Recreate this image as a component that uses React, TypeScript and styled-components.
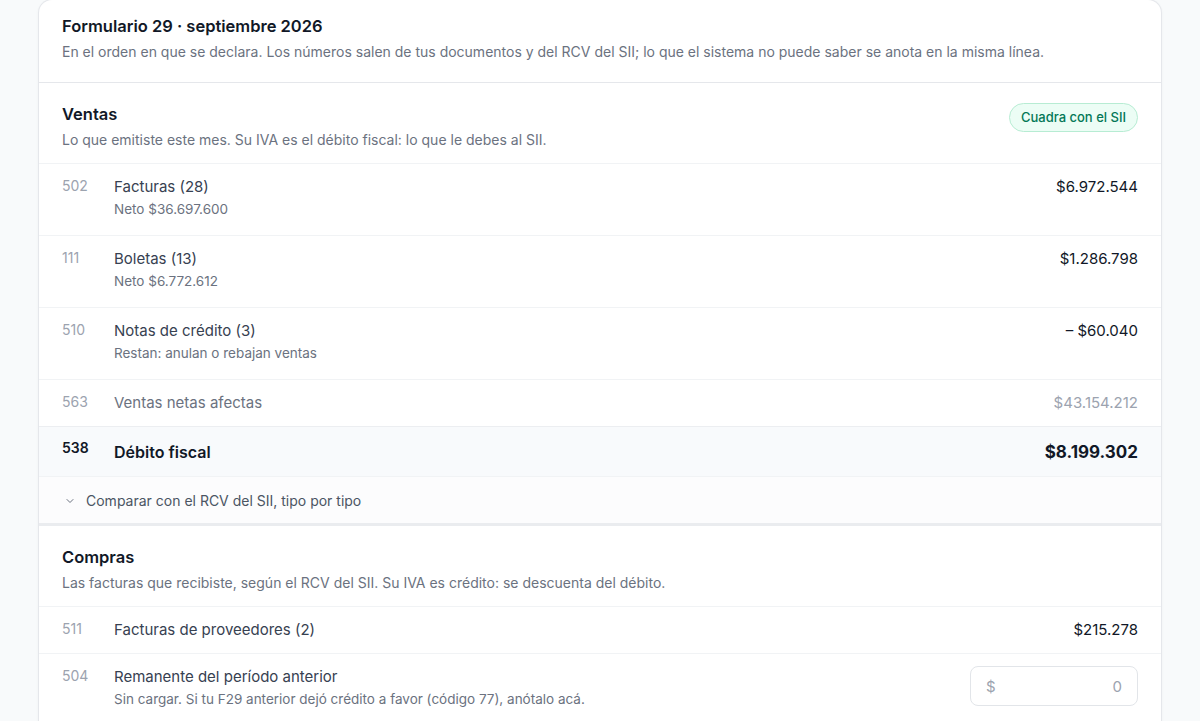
import styled, {createGlobalStyle} from "styled-components";

const GlobalStyle = createGlobalStyle`
  html, body {
    margin: 0;
    padding: 0;
    background: #f8fafb;
    font-family: Inter, "Liberation Sans", sans-serif;
    color: #111827;
  }
  * {
    box-sizing: border-box;
  }
`

type Tone = 'normal' | 'muted' | 'total'

interface IRow {
    code: string
    label: string
    sub?: string
    amount?: string
    tone?: Tone
    input?: boolean
}

const ventasRows: IRow[] = [
    {code: '502', label: 'Facturas (28)', sub: 'Neto $36.697.600', amount: '$6.972.544'},
    {code: '111', label: 'Boletas (13)', sub: 'Neto $6.772.612', amount: '$1.286.798'},
    {code: '510', label: 'Notas de crédito (3)', sub: 'Restan: anulan o rebajan ventas', amount: '– $60.040'},
    {code: '563', label: 'Ventas netas afectas', amount: '$43.154.212', tone: 'muted'},
    {code: '538', label: 'Débito fiscal', amount: '$8.199.302', tone: 'total'},
]

const comprasRows: IRow[] = [
    {code: '511', label: 'Facturas de proveedores (2)', amount: '$215.278'},
    {
        code: '504',
        label: 'Remanente del período anterior',
        sub: 'Sin cargar. Si tu F29 anterior dejó crédito a favor (código 77), anótalo acá.',
        input: true
    },
]

const LineRow = ({row}: { row: IRow }) => {
    const tone = row.tone ?? 'normal'
    return (
        <Row $tone={tone} $hasSub={!!row.sub}>
            <Code $tone={tone}>{row.code}</Code>
            <LabelBlock>
                <Label $tone={tone}>{row.label}</Label>
                {row.sub && <SubLabel>{row.sub}</SubLabel>}
            </LabelBlock>
            {row.input ? (
                <AmountInput>
                    <span>$</span>
                    <span>0</span>
                </AmountInput>
            ) : (
                <Amount $tone={tone}>{row.amount}</Amount>
            )}
        </Row>
    )
}

export default function App() {
    return (
        <>
            <GlobalStyle/>
            <Page>
                <Card>
                    <CardHeader>
                        <Title>Formulario 29 · septiembre 2026</Title>
                        <Subtitle>
                            En el orden en que se declara. Los números salen de tus documentos y del RCV del SII; lo que el sistema no puede saber se anota en la misma línea.
                        </Subtitle>
                    </CardHeader>

                    <Section>
                        <SectionHeader>
                            <SectionText>
                                <Title>Ventas</Title>
                                <Subtitle>Lo que emitiste este mes. Su IVA es el débito fiscal: lo que le debes al SII.</Subtitle>
                            </SectionText>
                            <Badge>Cuadra con el SII</Badge>
                        </SectionHeader>
                        {ventasRows.map(row => <LineRow key={row.code} row={row}/>)}
                        <Toggle>
                            <svg width="12" height="12" viewBox="0 0 24 24" fill="none" stroke="currentColor"
                                 strokeWidth="2" strokeLinecap="round" strokeLinejoin="round">
                                <path d="m6 9 6 6 6-6"/>
                            </svg>
                            Comparar con el RCV del SII, tipo por tipo
                        </Toggle>
                    </Section>

                    <Section>
                        <SectionHeader>
                            <SectionText>
                                <Title>Compras</Title>
                                <Subtitle>Las facturas que recibiste, según el RCV del SII. Su IVA es crédito: se descuenta del débito.</Subtitle>
                            </SectionText>
                        </SectionHeader>
                        {comprasRows.map(row => <LineRow key={row.code} row={row}/>)}
                    </Section>
                </Card>
            </Page>
        </>
    )
}

const Page = styled.div`
  min-height: 100vh;
  padding: 0 38px;
  display: flex;
`

const Card = styled.div`
  width: 1124px;
  margin-top: -1px;
  background: #ffffff;
  border: 1px solid #e5e7eb;
  border-bottom: none;
  border-radius: 14px 14px 0 0;
  box-shadow: 0 1px 3px rgba(15, 23, 42, 0.04);
`

const CardHeader = styled.div`
  padding: 15px 23px 20px 23px;
  border-bottom: 1px solid #e5e7eb;
  display: flex;
  flex-direction: column;
  gap: 5px;
`

const Title = styled.div`
  font-size: 16.5px;
  line-height: 22px;
  font-weight: 600;
  color: #111827;
`

const Subtitle = styled.div`
  font-size: 14px;
  line-height: 20px;
  color: #6b7280;
`

const Section = styled.div`
  & + & {
    border-top: 3px solid #eaecef;
  }
`

const SectionHeader = styled.div`
  display: flex;
  justify-content: space-between;
  align-items: flex-start;
  padding: 20px 23px 13px 23px;
  border-bottom: 1px solid #f1f3f5;
`

const SectionText = styled.div`
  display: flex;
  flex-direction: column;
  gap: 5px;
`

const Badge = styled.div`
  padding: 5px 11px;
  border-radius: 999px;
  background: #ecfdf5;
  border: 1px solid #b7ecd3;
  color: #047857;
  font-size: 13px;
  line-height: 17px;
  font-weight: 500;
  white-space: nowrap;
`

const Row = styled.div<{ $tone: Tone, $hasSub: boolean }>`
  display: flex;
  align-items: flex-start;
  padding: ${p => p.$tone === 'total' ? '13px 23px 12px 23px' : p.$hasSub ? '12px 23px 17px 23px' : '12px 23px 12px 23px'};
  border-bottom: 1px solid #f1f3f5;
  background: ${p => p.$tone === 'total' ? '#f8fafc' : '#ffffff'};
  border-top: ${p => p.$tone === 'total' ? '1px solid #eceef1' : 'none'};
  margin-top: ${p => p.$tone === 'total' ? '-1px' : '0'};
`

const Code = styled.div<{ $tone: Tone }>`
  width: 52px;
  flex-shrink: 0;
  font-size: 14px;
  line-height: ${p => p.$tone === 'total' ? '16px' : '20px'};
  color: ${p => p.$tone === 'total' ? '#111827' : '#9ca3af'};
  font-weight: ${p => p.$tone === 'total' ? 600 : 400};
`

const LabelBlock = styled.div`
  flex: 1;
  display: flex;
  flex-direction: column;
  gap: 2px;
`

const Label = styled.div<{ $tone: Tone }>`
  font-size: ${p => p.$tone === 'total' ? '16px' : '15px'};
  line-height: ${p => p.$tone === 'total' ? '24px' : '22px'};
  font-weight: ${p => p.$tone === 'total' ? 600 : 400};
  color: ${p => p.$tone === 'total' ? '#111827' : p.$tone === 'muted' ? '#6b7280' : '#374151'};
`

const SubLabel = styled.div`
  font-size: 13.5px;
  line-height: 18px;
  color: #6b7280;
`

const Amount = styled.div<{ $tone: Tone }>`
  font-size: ${p => p.$tone === 'total' ? '17px' : '15px'};
  line-height: ${p => p.$tone === 'total' ? '24px' : '22px'};
  font-weight: ${p => p.$tone === 'total' ? 700 : 400};
  color: ${p => p.$tone === 'muted' ? '#9ca3af' : '#111827'};
  white-space: nowrap;
`

const AmountInput = styled.div`
  width: 168px;
  height: 40px;
  display: flex;
  align-items: center;
  justify-content: space-between;
  padding: 0 15px;
  border: 1px solid #e2e5e9;
  border-radius: 8px;
  background: #ffffff;
  font-size: 15px;
  color: #9ca3af;
`

const Toggle = styled.div`
  display: flex;
  align-items: center;
  gap: 10px;
  padding: 14px 23px 12px 25px;
  font-size: 14px;
  line-height: 20px;
  color: #4b5563;
  background: #fcfcfd;

  svg {
    color: #6b7280;
  }
`
